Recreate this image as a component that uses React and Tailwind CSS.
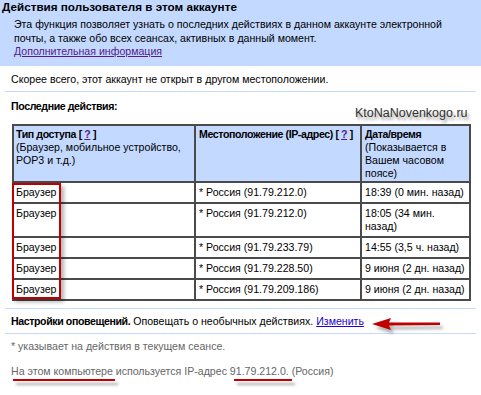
import React from "react";

const rows = [
  { ip: "91.79.212.0", time: ["18:39 (0 мин. назад)"] },
  { ip: "91.79.212.0", time: ["18:05 (34 мин.", "назад)"] },
  { ip: "91.79.233.79", time: ["14:55 (3,5 ч. назад)"] },
  { ip: "91.79.228.50", time: ["9 июня (2 дн. назад)"] },
  { ip: "91.79.209.186", time: ["9 июня (2 дн. назад)"] },
];

const cell = "border border-[#4a4a4a] align-top whitespace-nowrap";
const bold = "font-bold tracking-[-0.4px]";

function Arrow() {
  return (
    <svg className="absolute left-[368px] top-[312px]" width="80" height="26" viewBox="0 0 80 26">
      <defs>
        <filter id="sh" x="-20%" y="-50%" width="140%" height="200%">
          <feGaussianBlur stdDeviation="1.6" />
        </filter>
      </defs>
      <g filter="url(#sh)" opacity="0.45" transform="translate(3,4)">
        <path d="M4 12 L23 6 L21 10.5 L72 10.5 L72 13 L21 13.5 L23 18 Z" fill="#555" />
      </g>
      <path d="M4 12 L23 6 L21 10.5 L72 10.5 L72 13 L21 13.5 L23 18 Z" fill="#c00000" />
    </svg>
  );
}

export default function App() {
  return (
    <div className="relative w-[481px] h-[395px] overflow-hidden bg-white font-['Liberation_Sans',Arial,sans-serif] text-[10.6px] leading-[13px] text-black">
      <div className="h-[66px] bg-[#c3d9ff] px-[2px]">
        <h2 className="text-[11.7px] leading-[13px] font-bold whitespace-nowrap">Действия пользователя в этом аккаунте</h2>
        <div className="ml-[12px] mt-[5px] leading-[13.5px]">
          <p className="whitespace-nowrap">
            Эта функция позволяет узнать о последних действиях в данном аккаунте электронной
            <br />
            почты, а также обо всех сеансах, активных в данный момент.
          </p>
          <a className="text-[#551a8b] underline">Дополнительная информация</a>
        </div>
      </div>

      <div className="px-[5px]">
        <p className="px-[6px] pt-[7px] pb-[5px]">Скорее всего, этот аккаунт не открыт в другом местоположении.</p>
        <div className="h-[1px] bg-[#c3d9ff]" />
        <p className="px-[6px] pt-[8px] pb-[11px]">
          <b className={bold}>Последние действия:</b>
        </p>

        <table className="ml-[7px] w-[459px] table-fixed border-separate border-spacing-0 border border-[#4a4a4a]">
          <thead>
            <tr className="bg-[#c3d9ff] text-left">
              <th className={cell + " w-[182px] pl-[2px] pr-[2px] pt-[2px] pb-[1px] font-normal"}>
                <b className={bold}>
                  Тип доступа [ <a className="text-[#551a8b] underline">?</a> ]
                </b>
                <br />
                (Браузер, мобильное устройство,
                <br />
                POP3 и т.д.)
              </th>
              <th className={cell + " w-[166px] px-[3px] pt-[2px] pb-[1px] font-normal"}>
                <b className={bold}>
                  Местоположение (IP-адрес) [ <a className="text-[#551a8b] underline">?</a> ]
                </b>
              </th>
              <th className={cell + " w-[109px] px-[3px] pt-[2px] pb-[1px] font-normal"}>
                <b className={bold}>Дата/время</b>
                <br />
                (Показывается в
                <br />
                Вашем часовом
                <br />
                поясе)
              </th>
            </tr>
          </thead>
          <tbody>
            {rows.map((r, i) => (
              <tr key={i}>
                <td className={cell + " px-[2px] py-[3px]"}>Браузер</td>
                <td className={cell + " px-[3px] py-[3px]"}>* Россия ({r.ip})</td>
                <td className={cell + " px-[3px] py-[3px]"}>
                  {r.time.map((t, j) => (
                    <div key={j}>{t}</div>
                  ))}
                </td>
              </tr>
            ))}
          </tbody>
        </table>

        <div className="mt-[7px] h-[1px] bg-[#c3d9ff]" />
        <p className="px-[6px] pt-[6px] pb-[5px] whitespace-nowrap">
          <b className={bold}>Настройки оповещений.</b> Оповещать о необычных действиях.{" "}
          <a className="text-[#2200cc] underline">Изменить</a>
        </p>
        <div className="h-[1px] bg-[#c3d9ff]" />
        <p className="px-[6px] pt-[6px] text-[#666]">* указывает на действия в текущем сеансе.</p>
        <p className="px-[6px] pt-[12px] text-[#666]">На этом компьютере используется IP-адрес 91.79.212.0. (Россия)</p>
      </div>

      {/* watermark */}
      <div className="absolute left-[355px] top-[106px] text-[12.5px] leading-[14px] text-[#333] whitespace-nowrap [text-shadow:2px_3px_3px_rgba(0,0,0,0.4)]">
        KtoNaNovenkogo.ru
      </div>

      {/* annotations */}
      <div className="absolute left-[12px] top-[183px] w-[49px] h-[116px] border-2 border-[#c00000] shadow-[3px_3px_4px_rgba(0,0,0,0.3)]" />
      <div className="absolute left-[13px] top-[379px] w-[102px] h-[2px] bg-[#c00000] shadow-[3px_4px_3px_rgba(0,0,0,0.35)]" />
      <div className="absolute left-[234px] top-[379px] w-[58px] h-[2px] bg-[#c00000] shadow-[3px_4px_3px_rgba(0,0,0,0.35)]" />
      <Arrow />
    </div>
  );
}
